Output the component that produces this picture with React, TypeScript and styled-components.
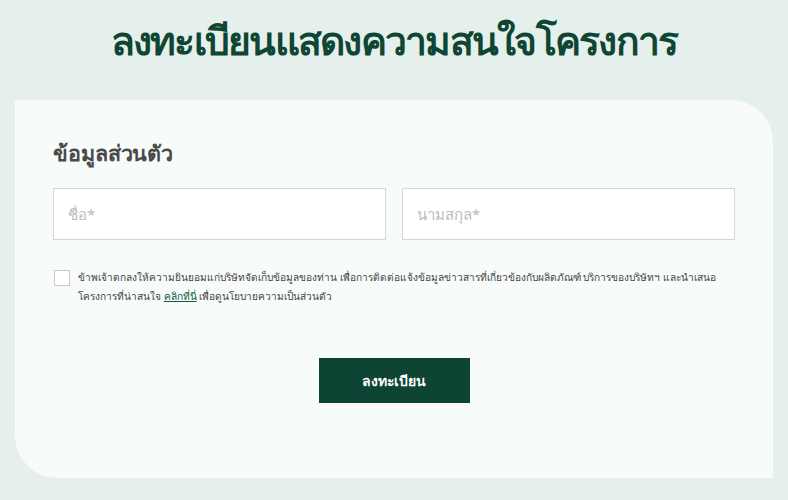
import React from "react";
import styled, { createGlobalStyle } from "styled-components";

const Global = createGlobalStyle`
  html, body { margin: 0; padding: 0; }
  body {
    background: #e5efeb;
    font-family: "Noto Sans", "DejaVu Sans", sans-serif;
    width: 788px;
    height: 500px;
    overflow: hidden;
  }
`;

const Page = styled.div`
  display: flex;
  flex-direction: column;
  align-items: stretch;
  padding: 0 15px;
`;

const Title = styled.h1`
  margin: 0;
  height: 100px;
  display: flex;
  align-items: center;
  justify-content: center;
  padding-bottom: 18px;
  box-sizing: border-box;
  font-size: 39px;
  font-weight: 700;
  color: #0e4633;
  letter-spacing: -1.75px;
`;

const Card = styled.section`
  background: #f7fbfa;
  height: 378px;
  box-sizing: border-box;
  border-radius: 0 42px 0 42px;
  padding: 38px 38px 0;
  display: flex;
  flex-direction: column;
`;

const SectionTitle = styled.h2`
  margin: 0 0 20px;
  font-size: 21.5px;
  font-weight: 700;
  color: #4a4a4a;
  line-height: 30px;
  letter-spacing: -0.1px;
`;

const Row = styled.div`
  display: grid;
  grid-template-columns: 1fr 1fr;
  gap: 16px;
`;

const Input = styled.input`
  height: 52px;
  box-sizing: border-box;
  border: 1px solid #d6d6d6;
  background: #fff;
  padding: 0 14px;
  font-family: inherit;
  font-size: 15px;
  color: #333;
  outline: none;
  &::placeholder { color: #bcbcbc; }
`;

const Consent = styled.label`
  display: flex;
  gap: 8px;
  margin-top: 28px;
  align-items: flex-start;
`;

const Box = styled.span`
  flex: none;
  width: 14px;
  height: 14px;
  border: 1px solid #c8c8c8;
  background: #fff;
  margin-top: 2px;
  margin-left: 1px;
`;

const ConsentText = styled.div`
  display: flex;
  flex-direction: column;
  font-size: 10.15px;
  line-height: 19px;
  color: #454545;
`;

const Line = styled.span`
  white-space: nowrap;
`;

const Link = styled.a`
  color: #0d5a40;
  text-decoration: underline;
`;

const Actions = styled.div`
  display: flex;
  justify-content: center;
  margin-top: 52px;
`;

const Button = styled.button`
  width: 151px;
  height: 45px;
  border: none;
  background: #0d4434;
  color: #fff;
  font-family: inherit;
  font-size: 14px;
  font-weight: 700;
  letter-spacing: -0.2px;
`;

export default function App() {
  return (
    <>
      <Global />
      <Page>
        <Title>ลงทะเบียนแสดงความสนใจโครงการ</Title>
        <Card>
          <SectionTitle>ข้อมูลส่วนตัว</SectionTitle>
          <Row>
            <Input placeholder="ชื่อ*" />
            <Input placeholder="นามสกุล*" />
          </Row>
          <Consent>
            <Box />
            <ConsentText>
              <Line>
                ข้าพเจ้าตกลงให้ความยินยอมแก่บริษัทจัดเก็บข้อมูลของท่าน เพื่อการติดต่อแจ้งข้อมูลข่าวสารที่เกี่ยวข้องกับผลิตภัณฑ์ บริการของบริษัทฯ และนำเสนอ
              </Line>
              <Line>
                โครงการที่น่าสนใจ <Link>คลิกที่นี่</Link> เพื่อดูนโยบายความเป็นส่วนตัว
              </Line>
            </ConsentText>
          </Consent>
          <Actions>
            <Button>ลงทะเบียน</Button>
          </Actions>
        </Card>
      </Page>
    </>
  );
}
